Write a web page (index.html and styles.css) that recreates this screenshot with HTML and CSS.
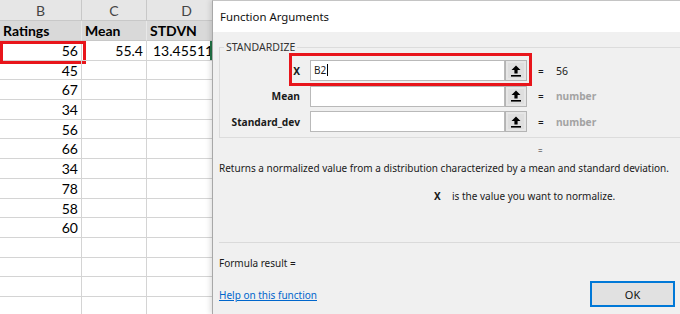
FILE: index.html
```html
<!DOCTYPE html>
<html lang="en">
<head>
    <meta charset="UTF-8">
    <meta name="viewport" content="width=device-width, initial-scale=1.0">
    <title>Function Arguments</title>
    <link rel="stylesheet" href="styles.css">
</head>
<body>

    <div class="sheet">
        <div class="col-head">B</div>
        <div class="col-head">C</div>
        <div class="col-head">D</div>

        <div class="cell title left">Ratings</div>
        <div class="cell title left">Mean</div>
        <div class="cell title left">STDVN</div>

        <div class="cell">56<span class="cell-mark"></span></div>
        <div class="cell">55.4</div>
        <div class="cell active">13.45511</div>

        <div class="cell">45</div><div class="cell"></div><div class="cell"></div>
        <div class="cell">67</div><div class="cell"></div><div class="cell"></div>
        <div class="cell">34</div><div class="cell"></div><div class="cell"></div>
        <div class="cell">56</div><div class="cell"></div><div class="cell"></div>
        <div class="cell">66</div><div class="cell"></div><div class="cell"></div>
        <div class="cell">34</div><div class="cell"></div><div class="cell"></div>
        <div class="cell">78</div><div class="cell"></div><div class="cell"></div>
        <div class="cell">58</div><div class="cell"></div><div class="cell"></div>
        <div class="cell">60</div><div class="cell"></div><div class="cell"></div>
        <div class="cell"></div><div class="cell"></div><div class="cell"></div>
        <div class="cell"></div><div class="cell"></div><div class="cell"></div>
        <div class="cell"></div><div class="cell"></div><div class="cell"></div>
        <div class="cell"></div><div class="cell"></div><div class="cell"></div>
    </div>

    <div class="dialog">
        <div class="titlebar">Function Arguments</div>

        <div class="dialog-body">
            <fieldset class="group">
                <legend>STANDARDIZE</legend>

                <div class="arg-row">
                    <label class="arg-name">X</label>
                    <div class="arg-input">B2<span class="caret"></span></div>
                    <button class="ref-btn"><svg width="10" height="12" viewBox="0 0 10 12"><path d="M5 0.5 L9.5 5 H6.6 V8.4 H3.4 V5 H0.5 Z" fill="#000"/><rect x="0" y="10" width="10" height="1.6" fill="#000"/></svg></button>
                    <span class="arg-eq">=</span>
                    <span class="arg-value">56</span>
                    <span class="arg-mark"></span>
                </div>
                <div class="arg-row">
                    <label class="arg-name">Mean</label>
                    <div class="arg-input"></div>
                    <button class="ref-btn"><svg width="10" height="12" viewBox="0 0 10 12"><path d="M5 0.5 L9.5 5 H6.6 V8.4 H3.4 V5 H0.5 Z" fill="#000"/><rect x="0" y="10" width="10" height="1.6" fill="#000"/></svg></button>
                    <span class="arg-eq">=</span>
                    <span class="arg-value muted">number</span>
                </div>
                <div class="arg-row">
                    <label class="arg-name">Standard_dev</label>
                    <div class="arg-input"></div>
                    <button class="ref-btn"><svg width="10" height="12" viewBox="0 0 10 12"><path d="M5 0.5 L9.5 5 H6.6 V8.4 H3.4 V5 H0.5 Z" fill="#000"/><rect x="0" y="10" width="10" height="1.6" fill="#000"/></svg></button>
                    <span class="arg-eq">=</span>
                    <span class="arg-value muted">number</span>
                </div>
            </fieldset>

            <div class="result-eq">=</div>
            <div class="desc">Returns a normalized value from a distribution characterized by a mean and standard deviation.</div>
            <div class="arg-help"><b>X</b><span>is the value you want to normalize.</span></div>

            <div class="separator"></div>

            <div class="formula">Formula result =</div>

            <div class="footer">
                <a href="#" class="help-link">Help on this function</a>
                <button class="ok-btn">OK</button>
            </div>
        </div>
    </div>

</body>
</html>
```

FILE: styles.css
```css
* {
    box-sizing: border-box;
}
body {
    margin: 0;
    width: 680px;
    height: 314px;
    overflow: hidden;
    position: relative;
    background: #fff;
}

/* spreadsheet behind the dialog */
.sheet {
    display: grid;
    grid-template-columns: 82px 65px 80px;
    grid-template-rows: 21px 20px;
    grid-auto-rows: 19.7px;
    font-family: Lato, "Liberation Sans", sans-serif;
    font-size: 14px;
    color: #000;
}
.col-head {
    background: #e6e6e6;
    border-right: 1px solid #c8c8c8;
    border-bottom: 1px solid #c8c8c8;
    color: #444;
    text-align: center;
    line-height: 21px;
    font-size: 14px;
}
.cell {
    position: relative;
    border-right: 1px solid #d4d4d4;
    border-bottom: 1px solid #d4d4d4;
    text-align: right;
    padding-right: 3px;
    line-height: 19px;
    white-space: nowrap;
}
.cell.title {
    background: #d9d9d9;
    font-weight: bold;
    border-right-color: #e8e8e8;
    border-bottom-color: #c8c8c8;
}
.cell.left {
    text-align: left;
    padding-left: 3px;
}
.cell.active {
    overflow: hidden;
    text-align: left;
    padding-left: 6px;
}
.cell.active::after {
    content: "";
    position: absolute;
    left: 63px;
    top: 0;
    width: 2px;
    height: 19px;
    background: #217346;
}
.cell-mark {
    position: absolute;
    left: 0;
    top: 0;
    width: 86px;
    height: 23px;
    border: 3px solid #e8151b;
}

/* dialog window */
.dialog {
    position: absolute;
    left: 212px;
    top: 0;
    width: 480px;
    height: 314px;
    border-top: 1px solid #c4c4c4;
    border-left: 1px solid #a8a8a8;
    box-shadow: -2px 0 5px rgba(0, 0, 0, 0.12);
    font-family: "Noto Sans", "Open Sans", sans-serif;
    font-size: 10px;
    color: #1a1a1a;
    background: #f0f0f0;
}
.titlebar {
    height: 31px;
    background: #fff;
    padding-left: 7px;
    font-size: 11.4px;
    line-height: 32px;
    color: #111;
}
.dialog-body {
    padding: 8px 0 0 6px;
}
.group {
    margin: 0 -20px 0 0;
    padding: 6px 0 3px 0;
    border: 1px solid #dcdcdc;
    height: 98px;
}
.group legend {
    margin-left: 4px;
    padding: 0 2px;
    font-size: 10.5px;
    line-height: 14px;
    color: #333;
}
.arg-row {
    position: relative;
    display: flex;
    align-items: center;
    height: 21px;
    margin-bottom: 4.5px;
}
.arg-name {
    width: 80px;
    text-align: right;
    font-weight: bold;
    font-size: 10.2px;
    margin-right: 10px;
}
.arg-input {
    width: 195px;
    height: 21px;
    background: #fff;
    border: 1px solid #b9b9b9;
    padding-left: 3px;
    line-height: 19px;
    font-size: 10px;
}
.caret {
    display: inline-block;
    width: 1px;
    height: 12px;
    background: #000;
    vertical-align: -2px;
    margin-left: 1px;
}
.ref-btn {
    width: 22px;
    height: 21px;
    margin: 0;
    padding: 0;
    border: 1px solid #b4b4b4;
    background: #dedede;
    box-shadow: inset 0 0 0 2px #e6e6e6;
    display: flex;
    align-items: center;
    justify-content: center;
}
.arg-eq {
    margin-left: 11px;
    width: 18px;
}
.arg-value {
    font-size: 10.5px;
}
.arg-value.muted {
    color: #a3a3a3;
    font-weight: bold;
    font-size: 10.2px;
}
.arg-mark {
    position: absolute;
    left: 69px;
    top: -7px;
    width: 243px;
    height: 33px;
    border: 3px solid #e8151b;
}
.result-eq {
    margin-top: 5px;
    padding-left: 319px;
    line-height: 16px;
    font-size: 8px;
}
.desc {
    margin-top: 1px;
    line-height: 16px;
    white-space: nowrap;
}
.arg-help {
    margin-top: 12px;
    padding-left: 215px;
    line-height: 16px;
}
.arg-help b {
    display: inline-block;
    width: 18px;
}
.separator {
    margin-top: 38px;
    margin-right: -10px;
    border-top: 1px solid #dadada;
}
.formula {
    margin-top: 12px;
    line-height: 16px;
}
.footer {
    margin-top: 10px;
    display: flex;
    align-items: center;
    justify-content: space-between;
    width: 456px;
}
.help-link {
    color: #0066cc;
    text-decoration: underline;
    padding-top: 2px;
}
.ok-btn {
    width: 85px;
    height: 26px;
    margin: 0;
    border: 2px solid #0078d7;
    background: #e1e1e1;
    font-family: "Noto Sans", "Open Sans", sans-serif;
    font-size: 11px;
    color: #111;
}
```
